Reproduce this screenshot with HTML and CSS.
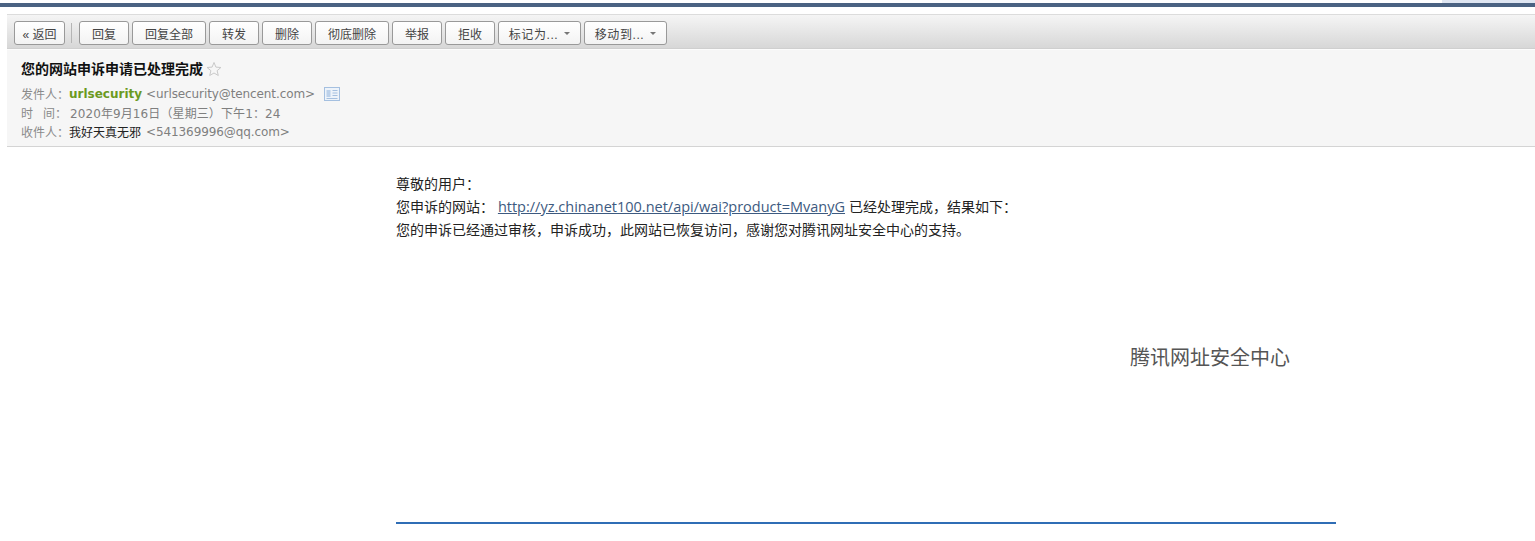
FILE: index.html
```html
<!DOCTYPE html>
<html lang="zh-CN">
<head>
<meta charset="UTF-8">
<title>您的网站申诉申请已处理完成</title>
<link rel="stylesheet" href="styles.css">
</head>
<body>

<!-- top strip -->
<div class="strip">
  <div class="strip-tab"></div>
</div>
<div class="strip-bar"></div>

<div class="mail">

  <!-- toolbar -->
  <div class="toolbar">
    <button class="btn btn-back">« 返回</button>
    <span class="sep"></span>
    <button class="btn btn-2">回复</button>
    <button class="btn btn-4">回复全部</button>
    <button class="btn btn-2">转发</button>
    <button class="btn btn-2">删除</button>
    <button class="btn btn-4">彻底删除</button>
    <button class="btn btn-2">举报</button>
    <button class="btn btn-2">拒收</button>
    <button class="btn btn-menu">标记为...<i class="caret"></i></button>
    <button class="btn btn-menu">移动到...<i class="caret"></i></button>
  </div>

  <!-- mail header -->
  <div class="head">
    <div class="subject">
      您的网站申诉申请已处理完成
      <svg class="star" viewBox="0 0 16 16"><path d="M8 1.500l1.900 4.600 5 .4-3.800 3.200 1.200 4.800L8 12l-4.300 2.500 1.200-4.800L1.100 6.500l5-.4z"/></svg>
    </div>
    <div class="row row-from">
      <span class="label">发件人：</span><b class="sender">urlsecurity</b>
      <span class="addr addr-mail">&lt;urlsecurity@tencent.com&gt;</span>
      <svg class="card" viewBox="0 0 16 14"><rect x=".5" y=".5" width="15" height="13"/><rect class="card-pic" x="2.500" y="3" width="4" height="7"/><path d="M8.500 3.500h5M8.500 6h5M8.500 8.500h5M2.500 11.500h11"/></svg>
    </div>
    <div class="row row-time">
      <span class="label">时&nbsp;&nbsp;&nbsp;间：</span><span class="addr">2020年9月16日（星期三）下午1：24</span>
    </div>
    <div class="row row-to">
      <span class="label">收件人：</span><span class="name">我好天真无邪</span>
      <span class="addr addr-mail">&lt;541369996@qq.com&gt;</span>
    </div>
  </div>

  <!-- mail body -->
  <div class="content">
    <p>尊敬的用户：</p>
    <p>您申诉的网站： <a href="#">http://yz.chinanet100.net/api/wai?product=MvanyG</a> 已经处理完成，结果如下：</p>
    <p>您的申诉已经通过审核，申诉成功，此网站已恢复访问，感谢您对腾讯网址安全中心的支持。</p>
    <div class="sign">腾讯网址安全中心</div>
  </div>

</div>

</body>
</html>
```

FILE: styles.css
```css
*{box-sizing:border-box;}
html,body{
  margin:0;
  height:100%;
  overflow:hidden;
  background:#fff;
  font-family:"Liberation Sans","Noto Sans CJK SC",sans-serif;
}

/* top strip */
.strip{
  height:3px;
  display:flex;
  justify-content:flex-end;
}
.strip-tab{width:93px;background:#dfe6f2;}
.strip-bar{
  height:4px;
  background:#4a6282;
}

.mail{
  margin:7px 0 0 7px;
}

/* toolbar */
.toolbar{
  height:35px;
  padding:6px 0 0 7px;
  display:flex;
  align-items:flex-start;
  gap:3px;
  border-top:1px solid #dcdcdc;
  border-bottom:1px solid #cfcfcf;
  background:linear-gradient(180deg,#f5f5f5,#d7d7d7);
}
.btn{
  height:24px;
  padding:0;
  font-family:inherit;
  font-size:12px;
  color:#444;
  background:linear-gradient(180deg,#fff,#f3f3f3);
  border:1px solid #999;
  border-radius:3px;
  display:flex;
  align-items:center;
  justify-content:center;
}
.btn-back{width:51px;}
.btn-2{width:50px;}
.btn-4{width:74px;}
.btn-menu{width:83px;gap:6px;letter-spacing:.6px;}
.sep{
  width:1px;
  height:20px;
  margin:2px 4px 0 3px;
  background:#b5b5b5;
}
.caret{
  width:0;
  height:0;
  border:3.5px solid transparent;
  border-top-color:#777;
  border-bottom:0;
}

/* mail header */
.head{
  height:98px;
  padding:9px 0 0 14px;
  background:#f6f6f6;
  border-top:1px solid #fcfcfc;
  border-bottom:1px solid #d4d4d4;
  font-size:12px;
  color:#8a8a8a;
}
.subject{
  height:20px;
  display:flex;
  align-items:center;
  gap:3px;
  font-size:14px;
  line-height:20px;
  font-weight:700;
  color:#111;
}
.star{
  width:16px;
  height:16px;
  fill:none;
  stroke:#c9c9c9;
  stroke-width:1;
}
.row{
  display:flex;
  align-items:center;
  height:19px;
  white-space:pre;
}
.row-from{margin-top:5px;}
.label{width:49px;color:#8a8a8a;}
.sender{
  font-family:"DejaVu Sans",sans-serif;
  font-size:12px;
  color:#6b9a1f;
  margin:0 4px 0 -1px;
}
.addr{
  font-family:"DejaVu Sans","Noto Sans CJK SC",sans-serif;
  font-size:12px;
  color:#7f7f7f;
}
.addr-mail{letter-spacing:-.1px;}
.row-time .addr{letter-spacing:.1px;}
.name{
  color:#222;
  margin-right:5px;
  margin-left:-1px;
}
.card{
  width:16px;
  height:14px;
  margin-left:9px;
  fill:#edf3fa;
  stroke:#a5c0e0;
  stroke-width:1;
}
.card-pic{fill:#bcd1ea;stroke:none;}

/* mail body */
.content{
  width:940px;
  margin-left:389px;
  height:377px;
  padding-top:26px;
  border-bottom:2px solid #2f6db5;
  font-size:14px;
  line-height:23px;
  color:#222;
}
.content p{margin:0;height:23px;}
.content a{
  font-family:"Open Sans",sans-serif;
  font-size:14.5px;
  line-height:1;
  color:#3d5a80;
  text-decoration:underline;
}
.sign{
  margin-top:102px;
  padding-right:46px;
  text-align:right;
  font-size:20px;
  line-height:28px;
  color:#555;
}
```
